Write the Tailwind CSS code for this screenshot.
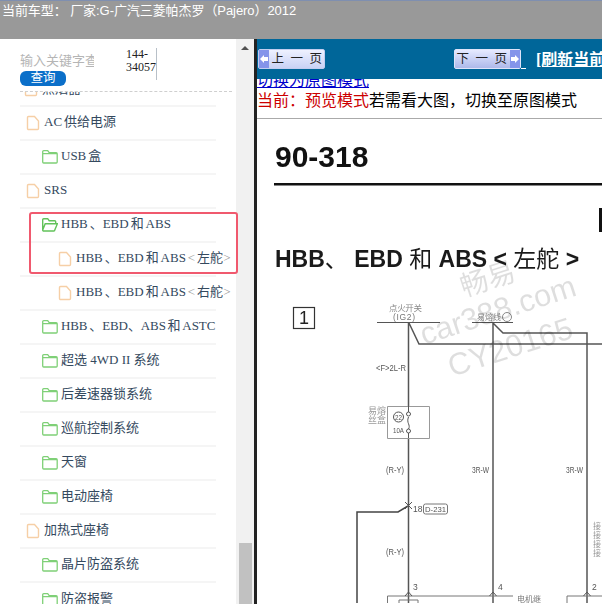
<!DOCTYPE html>
<html><head><meta charset="utf-8"><script src="https://cdn.jsdelivr.net/npm/@tailwindcss/browser@4"></script></head>
<body class="m-0 overflow-hidden bg-white">
<div class="relative w-[602px] h-[604px] overflow-hidden flex flex-col font-['Liberation_Sans','Noto_Sans_CJK_SC',sans-serif]">
  <!-- top bar -->
  <div class="h-[39px] shrink-0 bg-[#999999] border-t border-[#7f8fb0] pl-[2px] text-white text-[13px] tracking-[-0.07px] leading-[17px] pt-[1px] whitespace-nowrap">当前车型： 厂家:G-广汽三菱帕杰罗（Pajero）2012</div>
  <div class="flex flex-1 min-h-0">
    <!-- sidebar -->
    <div class="w-[236px] shrink-0 flex flex-col overflow-hidden">
      <div class="h-[52px] shrink-0 flex pl-[20px] pt-[10px]">
        <div class="w-[74px]">
          <div class="h-[24px] overflow-hidden whitespace-nowrap text-[13px] leading-[23px] text-[#b5b5b5]">输入关键字查询</div>
          <div class="-mt-[2px] w-[46px] h-[15px] rounded-[6px] bg-[#0b6fc9] text-white text-[12.5px] leading-[15px] text-center">查询</div>
        </div>
        <div class="ml-[32px] w-[31px] h-[32px] -mt-[1px] border-r border-[#b8c0c8] font-['Liberation_Serif'] text-[12px] leading-[13px] text-[#222]">144-<br>34057</div>
      </div>
      <div class="ml-[20px] w-[212px] border-t border-dashed border-[#cfcfcf] flex-1 overflow-hidden font-['Liberation_Serif','Noto_Sans_CJK_SC',serif] text-[13px] text-[#34495e] [word-spacing:-1.3px]">
        <div class="w-[196px] [&>div>span]:relative [&>div>span]:-top-[1px]">
          <div class="h-[15px] overflow-hidden border-b-2 border-[#f5f5f5] relative"><div class="absolute left-[4px] -top-[12px] flex items-center gap-[4px] h-[17px]"><svg viewBox="0 0 14 16" class="w-[14px] h-[16px] fill-none stroke-[#f6cfa6] stroke-[1.4]"><path d="M1.5 2.5a1 1 0 0 1 1-1h6l4 4.5v7.5a1 1 0 0 1-1 1h-9a1 1 0 0 1-1-1z"/></svg><span>点烟器</span></div></div>

          <div class="h-[34px] flex items-center pl-[6px] gap-[4px] border-b-2 border-[#f5f5f5]"><svg viewBox="0 0 14 16" class="w-[14px] h-[16px] fill-none stroke-[#f6cfa6] stroke-[1.4]"><path d="M1.5 2.5a1 1 0 0 1 1-1h6l4 4.5v7.5a1 1 0 0 1-1 1h-9a1 1 0 0 1-1-1z"/></svg><span>AC 供给电源</span></div>

          <div class="h-[34px] flex items-center pl-[22px] gap-[3px] border-b-2 border-[#f5f5f5]"><svg viewBox="0 0 16 14" class="w-[16px] h-[14px] fill-none stroke-[#7fd077] stroke-[1.3]"><path d="M.7 12V1.700a1 1 0 0 1 1-1h4l1.500 2h7a1 1 0 0 1 1 1V12a1 1 0 0 1-1 1H1.700a1 1 0 0 1-1-1zM.7 3.700h14.500"/></svg><span>USB 盒</span></div>

          <div class="h-[34px] flex items-center pl-[6px] gap-[4px] border-b-2 border-[#f5f5f5]"><svg viewBox="0 0 14 16" class="w-[14px] h-[16px] fill-none stroke-[#f6cfa6] stroke-[1.4]"><path d="M1.5 2.5a1 1 0 0 1 1-1h6l4 4.5v7.5a1 1 0 0 1-1 1h-9a1 1 0 0 1-1-1z"/></svg><span>SRS</span></div>

          <div class="h-[34px] flex items-center pl-[22px] gap-[3px] border-b-2 border-[#f5f5f5]"><svg viewBox="0 0 16 14" class="w-[16px] h-[14px] fill-none stroke-[#62c25a] stroke-[1.4]"><path d="M.7 12V1.700a1 1 0 0 1 1-1h4l1.500 2h5.500a1 1 0 0 1 1 1v2M.7 12l2.500-6.300h12.200L12.800 12a1 1 0 0 1-1 1H1.700a1 1 0 0 1-1-1z"/></svg><span>HBB 、EBD 和 ABS</span></div>

          <div class="h-[34px] flex items-center pl-[38px] gap-[4px] border-b-2 border-[#f5f5f5] whitespace-nowrap"><svg viewBox="0 0 14 16" class="w-[14px] h-[16px] shrink-0 fill-none stroke-[#f6cfa6] stroke-[1.4]"><path d="M1.5 2.5a1 1 0 0 1 1-1h6l4 4.5v7.5a1 1 0 0 1-1 1h-9a1 1 0 0 1-1-1z"/></svg><span>HBB 、EBD 和 ABS <span class="text-[#999]">&lt;</span> 左舵<span class="text-[#999]">&gt;</span></span></div>

          <div class="h-[34px] flex items-center pl-[38px] gap-[4px] border-b-2 border-[#f5f5f5] whitespace-nowrap"><svg viewBox="0 0 14 16" class="w-[14px] h-[16px] shrink-0 fill-none stroke-[#f6cfa6] stroke-[1.4]"><path d="M1.5 2.5a1 1 0 0 1 1-1h6l4 4.5v7.5a1 1 0 0 1-1 1h-9a1 1 0 0 1-1-1z"/></svg><span>HBB 、EBD 和 ABS <span class="text-[#999]">&lt;</span> 右舵<span class="text-[#999]">&gt;</span></span></div>

          <div class="h-[34px] flex items-center pl-[22px] gap-[3px] border-b-2 border-[#f5f5f5] whitespace-nowrap"><svg viewBox="0 0 16 14" class="w-[16px] h-[14px] shrink-0 fill-none stroke-[#7fd077] stroke-[1.3]"><path d="M.7 12V1.700a1 1 0 0 1 1-1h4l1.500 2h7a1 1 0 0 1 1 1V12a1 1 0 0 1-1 1H1.700a1 1 0 0 1-1-1zM.7 3.700h14.500"/></svg><span class="tracking-[-0.1px]">HBB 、EBD、ABS 和 ASTC</span></div>

          <div class="h-[34px] flex items-center pl-[22px] gap-[3px] border-b-2 border-[#f5f5f5]"><svg viewBox="0 0 16 14" class="w-[16px] h-[14px] fill-none stroke-[#7fd077] stroke-[1.3]"><path d="M.7 12V1.700a1 1 0 0 1 1-1h4l1.500 2h7a1 1 0 0 1 1 1V12a1 1 0 0 1-1 1H1.700a1 1 0 0 1-1-1zM.7 3.700h14.500"/></svg><span class="[word-spacing:0]">超选 4WD II 系统</span></div>

          <div class="h-[34px] flex items-center pl-[22px] gap-[3px] border-b-2 border-[#f5f5f5]"><svg viewBox="0 0 16 14" class="w-[16px] h-[14px] fill-none stroke-[#7fd077] stroke-[1.3]"><path d="M.7 12V1.700a1 1 0 0 1 1-1h4l1.500 2h7a1 1 0 0 1 1 1V12a1 1 0 0 1-1 1H1.700a1 1 0 0 1-1-1zM.7 3.700h14.500"/></svg><span>后差速器锁系统</span></div>

          <div class="h-[34px] flex items-center pl-[22px] gap-[3px] border-b-2 border-[#f5f5f5]"><svg viewBox="0 0 16 14" class="w-[16px] h-[14px] fill-none stroke-[#7fd077] stroke-[1.3]"><path d="M.7 12V1.700a1 1 0 0 1 1-1h4l1.500 2h7a1 1 0 0 1 1 1V12a1 1 0 0 1-1 1H1.700a1 1 0 0 1-1-1zM.7 3.700h14.500"/></svg><span>巡航控制系统</span></div>

          <div class="h-[34px] flex items-center pl-[22px] gap-[3px] border-b-2 border-[#f5f5f5]"><svg viewBox="0 0 16 14" class="w-[16px] h-[14px] fill-none stroke-[#7fd077] stroke-[1.3]"><path d="M.7 12V1.700a1 1 0 0 1 1-1h4l1.500 2h7a1 1 0 0 1 1 1V12a1 1 0 0 1-1 1H1.700a1 1 0 0 1-1-1zM.7 3.700h14.500"/></svg><span>天窗</span></div>

          <div class="h-[34px] flex items-center pl-[22px] gap-[3px] border-b-2 border-[#f5f5f5]"><svg viewBox="0 0 16 14" class="w-[16px] h-[14px] fill-none stroke-[#7fd077] stroke-[1.3]"><path d="M.7 12V1.700a1 1 0 0 1 1-1h4l1.500 2h7a1 1 0 0 1 1 1V12a1 1 0 0 1-1 1H1.700a1 1 0 0 1-1-1zM.7 3.700h14.500"/></svg><span>电动座椅</span></div>

          <div class="h-[34px] flex items-center pl-[6px] gap-[4px] border-b-2 border-[#f5f5f5]"><svg viewBox="0 0 14 16" class="w-[14px] h-[16px] fill-none stroke-[#f6cfa6] stroke-[1.4]"><path d="M1.5 2.5a1 1 0 0 1 1-1h6l4 4.5v7.5a1 1 0 0 1-1 1h-9a1 1 0 0 1-1-1z"/></svg><span>加热式座椅</span></div>

          <div class="h-[34px] flex items-center pl-[22px] gap-[3px] border-b-2 border-[#f5f5f5]"><svg viewBox="0 0 16 14" class="w-[16px] h-[14px] fill-none stroke-[#7fd077] stroke-[1.3]"><path d="M.7 12V1.700a1 1 0 0 1 1-1h4l1.500 2h7a1 1 0 0 1 1 1V12a1 1 0 0 1-1 1H1.700a1 1 0 0 1-1-1zM.7 3.700h14.500"/></svg><span>晶片防盗系统</span></div>

          <div class="h-[34px] flex items-center pl-[22px] gap-[3px]"><svg viewBox="0 0 16 14" class="w-[16px] h-[14px] fill-none stroke-[#7fd077] stroke-[1.3]"><path d="M.7 12V1.700a1 1 0 0 1 1-1h4l1.500 2h7a1 1 0 0 1 1 1V12a1 1 0 0 1-1 1H1.700a1 1 0 0 1-1-1zM.7 3.700h14.500"/></svg><span>防盗报警</span></div>
        </div>
      </div>
    </div>
    <!-- scrollbar -->
    <div class="w-[18px] shrink-0 bg-[#f1f1f1] flex flex-col items-center pt-[7px] justify-between">
      <div class="w-0 h-0 border-x-[4px] border-x-transparent border-b-[4px] border-b-[#505050]"></div>
      <div class="w-[13px] h-[61px] bg-[#c1c1c1]"></div>
    </div>
    <div class="w-[3px] shrink-0 bg-[#222222]"></div>
    <!-- main -->
    <div class="flex-1 min-w-0 flex flex-col overflow-hidden">
      <div class="h-[40px] shrink-0 bg-[#006699] flex items-start pt-[10px] pl-[1px] whitespace-nowrap overflow-hidden">
        <div class="w-[67px] h-[20px] shrink-0 flex items-center rounded-[2px] border border-[#c3cdf0] bg-gradient-to-b from-[#eef1ff] to-[#c9d2f5]">
          <div class="w-[10px] h-[18px] bg-[#8494ea] flex items-center justify-center"><svg viewBox="0 0 8 8" class="w-[8px] h-[8px] fill-white"><path d="M0 4l4-4v2h4v4H4v2z"/></svg></div>
          <div class="flex-1 text-center text-[12.5px] leading-[18px] text-[#222] tracking-[1.5px] pl-[2px]">上 一 页</div>
        </div>
        <div class="ml-[129px] w-[67px] h-[20px] shrink-0 flex items-center rounded-[2px] border border-[#dfe4fa] bg-gradient-to-b from-[#e6eaff] to-[#aeb9ea]">
          <div class="flex-1 text-center text-[12.5px] leading-[18px] text-[#222] tracking-[1.5px]">下 一 页</div>
          <div class="w-[10px] h-[18px] bg-[#8494ea] flex items-center justify-center"><svg viewBox="0 0 8 8" class="w-[8px] h-[8px] fill-white"><path d="M8 4L4 0v2H0v4h4v2z"/></svg></div>
        </div>
        <div class="w-[5px] h-[20px] shrink-0 border-b border-white"></div>
        <div class="ml-[10px] mt-[1px] text-white font-bold text-[16px] leading-[20px] underline font-['Liberation_Serif','Noto_Sans_CJK_SC',serif]">[刷新当前页]</div>
      </div>
      <div class="h-[11px] shrink-0 overflow-hidden relative"><a class="absolute left-0 -top-[8px] text-[#0000cc] underline text-[16px] leading-[19px] whitespace-nowrap">切换为原图模式</a></div>
      <div class="h-[29px] shrink-0 border-b border-[#aaaaaa] text-[16px] leading-[22px] whitespace-nowrap text-black"><span class="text-[#cc0000]">当前：预览模式</span>若需看大图，切换至原图模式</div>
      <!-- scanned page -->
      <div class="relative flex-1 overflow-hidden">
        <svg viewBox="257 120 345 484" class="absolute inset-0 w-[345px] h-[484px] blur-[0.35px]" font-family="Liberation Sans, Noto Sans CJK SC, sans-serif">
          <g fill="none" stroke="#555" stroke-width="1.5">
            <path d="M408.500 324V604M409 324L419 345H602M493 324V604M493 324L503 334H587V604"/>
            <path d="M377 323.500H440M472 323.500H513" stroke-width="1.2"/>
            <path d="M408 507L398 513H357V604" stroke="#444"/>
            <path d="M387.500 407.500H429.500V439.500H387.500z" stroke="#999" stroke-width="1" fill="#fff"/>
            <path d="M408.500 407V414M408.500 439V432M408.500 418C406 424 411 426 408.500 430" stroke-width="1"/>
            <circle cx="408.500" cy="415" r="2" fill="#fff" stroke-width="1"/><circle cx="408.500" cy="432" r="2" fill="#fff" stroke-width="1"/>
            <circle cx="398.500" cy="418" r="5" stroke-width="1"/>
            <path d="M387.500 604V597H513M567 604V597H602" stroke="#777" stroke-width="1"/>
            <path d="M399 604V601H418V604" stroke="#777" stroke-width="1"/>
            <path d="M405 503L412 510M412 503L405 510M405 597L408.500 593L412 597M489.500 597L493 593L496.500 597M583.500 597L587 593L590.500 597" stroke-width="1"/>
            <rect x="293.500" y="308.500" width="21" height="21" stroke="#333" stroke-width="1.2"/>
            <rect x="423.500" y="505" width="24" height="10" rx="2" stroke="#777" stroke-width="1"/>
            <circle cx="507" cy="318" r="4.500" stroke="#888" stroke-width="1"/>
          </g>
          <g fill="#555" font-size="8.500">
            <text x="389" y="312" fill="#888" textLength="33">点火开关</text>
            <text x="393" y="321" fill="#777" textLength="22">(IG2)</text>
            <text x="477" y="321" fill="#888" font-size="8">易熔线</text>
            <text x="376" y="372" textLength="30" lengthAdjust="spacingAndGlyphs">&lt;F&gt;2L-R</text>
            <text x="368" y="415" fill="#999" font-size="9">易熔</text>
            <text x="368" y="424" fill="#999" font-size="9">丝盒</text>
            <text x="395" y="421" font-size="6.500" textLength="7" lengthAdjust="spacingAndGlyphs">22</text>
            <text x="393" y="434" font-size="7.500" textLength="11" lengthAdjust="spacingAndGlyphs">10A</text>
            <text x="386" y="474" textLength="18" lengthAdjust="spacingAndGlyphs">(R-Y)</text>
            <text x="472" y="474" textLength="17" lengthAdjust="spacingAndGlyphs">3R-W</text>
            <text x="566" y="474" textLength="17" lengthAdjust="spacingAndGlyphs">3R-W</text>
            <text x="413" y="513">18</text>
            <text x="425" y="513" font-size="7.500" textLength="21" lengthAdjust="spacingAndGlyphs">D-231</text>
            <text x="386" y="556" textLength="18" lengthAdjust="spacingAndGlyphs">(R-Y)</text>
            <text x="413" y="591">3</text><text x="498" y="591">4</text><text x="592" y="591">2</text>
            <text x="517" y="603" fill="#777" font-size="8">电机继</text>
            <text x="593" y="530" fill="#999" font-size="8">接</text><text x="593" y="539" fill="#999" font-size="8">接</text><text x="593" y="548" fill="#999" font-size="8">接</text><text x="593" y="557" fill="#999" font-size="8">接</text>
            <text x="299" y="325" font-size="18" fill="#222">1</text>
          </g>
          <text x="275" y="168" font-size="30" font-weight="700" fill="#111">90-318</text>
          <rect x="274" y="184" width="328" height="2.500" fill="#111"/>
          <rect x="599" y="209" width="3" height="24" fill="#111"/>
          <text x="275" y="268" font-size="23" font-weight="700" fill="#1a1a1a">HBB<tspan font-weight="400">、</tspan> EBD <tspan font-weight="400">和</tspan> ABS &lt; <tspan font-weight="400">左舵</tspan> &gt;</text>
          <g fill="#000" fill-opacity="0.13">
            <text transform="rotate(-18 464 298)" x="464" y="298" font-size="28">畅易</text>
            <text transform="rotate(-18 424 346)" x="424" y="346" font-size="31">car388.com</text>
            <text transform="rotate(-18 452 378)" x="452" y="378" font-size="31">CY20165</text>
          </g>
        </svg>
      </div>
    </div>
  </div>
  <!-- selection highlight -->
  <div class="absolute left-[29px] top-[212px] w-[209px] h-[62px] border-2 border-[#f0596e] rounded-[3px]"></div>
</div>
</body></html>
